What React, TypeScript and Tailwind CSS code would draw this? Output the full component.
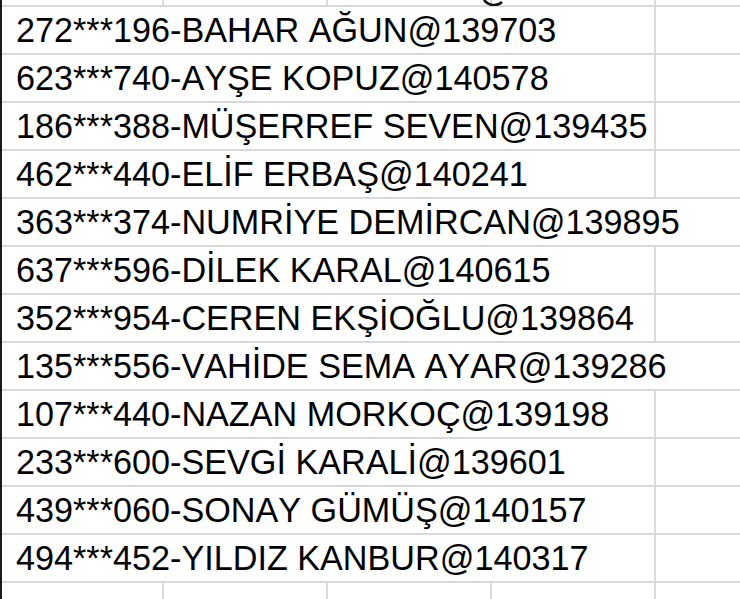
const rows: { text: string; span: 4 | 5 }[] = [
  { text: '272***196-BAHAR AĞUN@139703', span: 4 },
  { text: '623***740-AYŞE KOPUZ@140578', span: 4 },
  { text: '186***388-MÜŞERREF SEVEN@139435', span: 4 },
  { text: '462***440-ELİF ERBAŞ@140241', span: 4 },
  { text: '363***374-NUMRİYE DEMİRCAN@139895', span: 5 },
  { text: '637***596-DİLEK KARAL@140615', span: 4 },
  { text: '352***954-CEREN EKŞİOĞLU@139864', span: 4 },
  { text: '135***556-VAHİDE SEMA AYAR@139286', span: 5 },
  { text: '107***440-NAZAN MORKOÇ@139198', span: 4 },
  { text: '233***600-SEVGİ KARALİ@139601', span: 4 },
  { text: '439***060-SONAY GÜMÜŞ@140157', span: 4 },
  { text: '494***452-YILDIZ KANBUR@140317', span: 4 },
];

function EmptyCells({ count, height }: { count: number; height: string }) {
  return (
    <>
      {Array.from({ length: count }).map((_, i) => (
        <div key={i} className={`${height} border-r-2 border-[#d9d9d9]`} />
      ))}
    </>
  );
}

export default function App() {
  return (
    <div
      className="relative w-[740px] h-[599px] overflow-hidden bg-white border-l-2 border-[#1a1a1a] text-black [font-kerning:none]"
      style={{ fontFamily: '"Liberation Sans", Arial, sans-serif' }}
    >
      {/* descender peeking from the row above */}
      <svg className="absolute left-[480px] top-0" width="22" height="6" viewBox="0 0 22 6">
        <path d="M2 0 Q6 5 12 5 Q17 5 20 2" stroke="#111" strokeWidth="2.6" fill="none" />
      </svg>

      {/* partial row at the top */}
      <div className="grid grid-cols-[162px_164px_164px_164px_1fr] border-b-2 border-[#d9d9d9]">
        <EmptyCells count={4} height="h-[5px]" />
        <div className="h-[5px]" />
      </div>

      {rows.map((row) => (
        <div
          key={row.text}
          className="grid grid-cols-[162px_164px_164px_164px_1fr] border-b-2 border-[#d9d9d9]"
        >
          <div
            className={`h-[46px] pl-[14px] whitespace-nowrap text-[34.2px] leading-[46px] ${
              row.span === 4 ? 'col-span-4 border-r-2 border-[#d9d9d9]' : 'col-span-5'
            }`}
          >
            {row.text}
          </div>
          {row.span === 4 && <div className="h-[46px]" />}
        </div>
      ))}

      {/* partial row at the bottom */}
      <div className="grid grid-cols-[162px_164px_164px_164px_1fr]">
        <EmptyCells count={4} height="h-[20px]" />
        <div className="h-[20px]" />
      </div>
    </div>
  );
}
